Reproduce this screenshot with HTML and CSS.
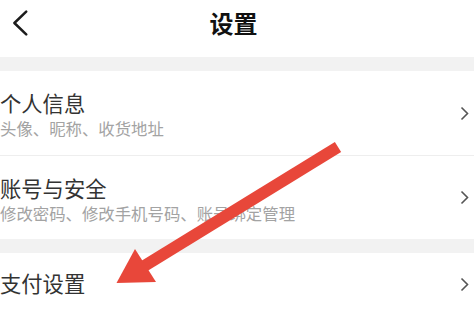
FILE: index.html
```html
<!DOCTYPE html>
<html lang="zh-CN">
<head>
<meta charset="utf-8">
<title>设置</title>
<link rel="stylesheet" href="styles.css">
</head>
<body>
<div class="page">
  <header class="header">
    <div class="back">
      <svg width="16" height="26" viewBox="0 0 16 26"><path d="M14.2 1.6 L2.4 13 L14.2 24.4" fill="none" stroke="#1c1c1c" stroke-width="2.5" stroke-linecap="round" stroke-linejoin="round"/></svg>
    </div>
    <h1 class="title">设置</h1>
    <div></div>
  </header>
  <div class="band"></div>
  <div class="group">
    <div class="row tall">
      <div class="text">
        <div class="name">个人信息</div>
        <div class="desc">头像、昵称、收货地址</div>
      </div>
      <svg class="chev" width="9" height="15" viewBox="0 0 9 15"><path d="M1.5 1.5 L7.5 7.5 L1.5 13.5" fill="none" stroke="#555" stroke-width="1.6"/></svg>
    </div>
    <div class="row tall last">
      <div class="text">
        <div class="name">账号与安全</div>
        <div class="desc">修改密码、修改手机号码、账号绑定管理</div>
      </div>
      <svg class="chev" width="9" height="15" viewBox="0 0 9 15"><path d="M1.5 1.5 L7.5 7.5 L1.5 13.5" fill="none" stroke="#555" stroke-width="1.6"/></svg>
    </div>
  </div>
  <div class="band"></div>
  <div class="group">
    <div class="row single">
      <div class="text">
        <div class="name">支付设置</div>
      </div>
      <svg class="chev" width="9" height="15" viewBox="0 0 9 15"><path d="M1.5 1.5 L7.5 7.5 L1.5 13.5" fill="none" stroke="#555" stroke-width="1.6"/></svg>
    </div>
  </div>
  <svg class="arrow" width="474" height="316" viewBox="0 0 474 316">
    <line x1="338" y1="147" x2="141" y2="268" stroke="#e8473a" stroke-width="12"/>
    <polygon points="116.5,283 135,249 156,282" fill="#e8473a"/>
  </svg>
</div>
</body>
</html>
```
FILE: styles.css
```css
html, body {
  margin: 0;
  padding: 0;
  background: #ffffff;
}
.page {
  position: relative;
  width: 474px;
  height: 316px;
  overflow: hidden;
  font-family: "Noto Sans CJK SC", "Noto Sans", sans-serif;
  background: #ffffff;
}
.header {
  height: 57px;
  box-sizing: border-box;
  padding-bottom: 11px;
  display: grid;
  grid-template-columns: 1fr auto 1fr;
  align-items: center;
}
.back {
  padding-left: 12px;
  display: flex;
  align-items: center;
  height: 26px;
}
.back svg {
  display: block;
}
.title {
  margin: 0 7px 0 0;
  font-size: 24px;
  font-weight: 700;
  line-height: 46px;
  color: #111111;
}
.band {
  height: 14px;
  background: #f2f2f2;
}
.group {
  display: flex;
  flex-direction: column;
}
.row {
  display: flex;
  align-items: center;
  padding-right: 5px;
  border-bottom: 1px solid #eeeeee;
}
.row.tall {
  height: 84px;
}
.row.tall.last {
  height: 83px;
  border-bottom: none;
}
.row.single {
  height: 63px;
}
.text {
  flex: 1;
  min-width: 0;
}
.row.tall .text {
  align-self: flex-start;
  padding-top: 19px;
}
.row.single .text {
  padding-bottom: 3px;
}
.name {
  font-size: 21.3px;
  line-height: 26px;
  color: #333333;
  white-space: nowrap;
}
.desc {
  margin-top: 2px;
  font-size: 16.4px;
  line-height: 21px;
  color: #a3a3a3;
  white-space: nowrap;
}
.chev {
  display: block;
  flex: none;
}
.arrow {
  position: absolute;
  left: 0;
  top: 0;
  pointer-events: none;
}
```
